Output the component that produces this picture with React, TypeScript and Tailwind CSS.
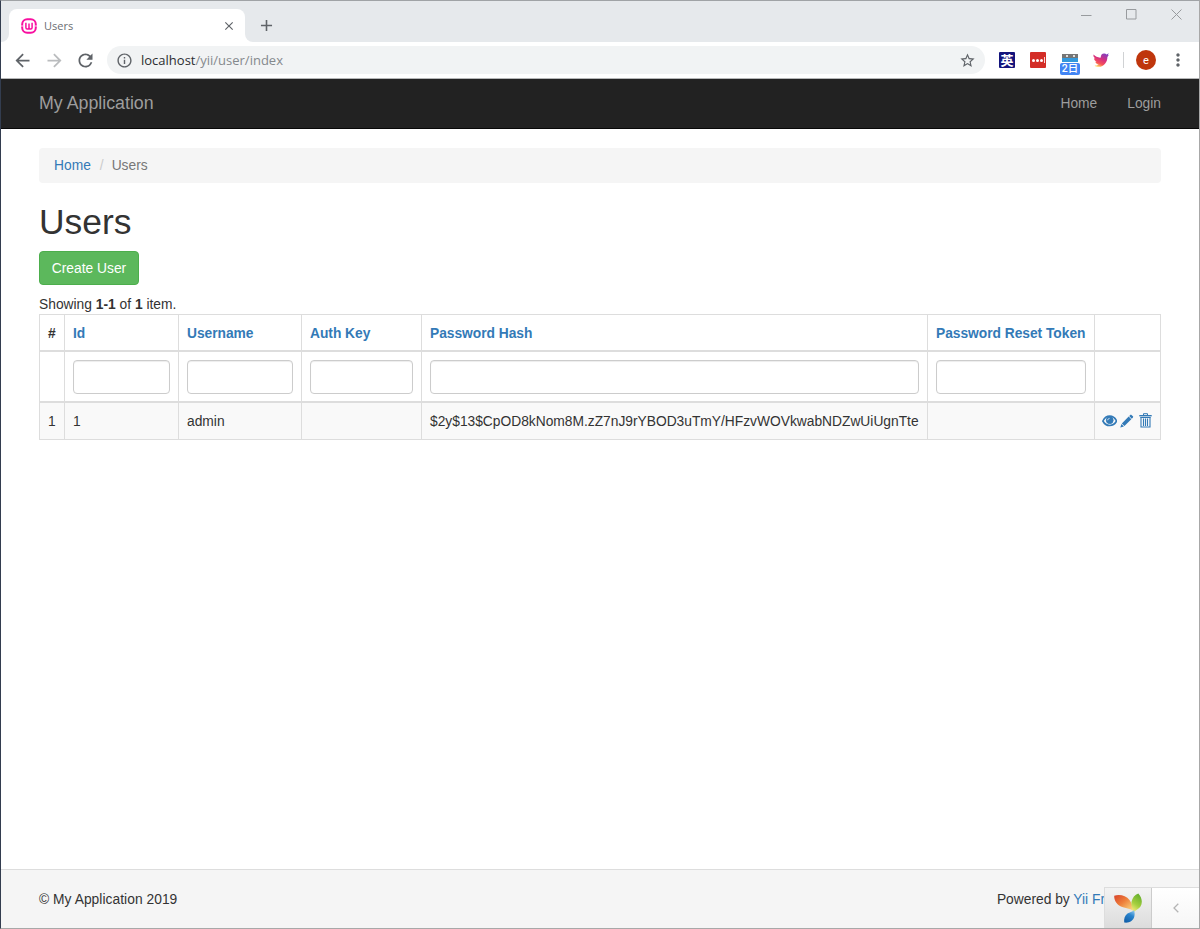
import {
  MdAdd,
  MdArrowBack,
  MdArrowForward,
  MdClose,
  MdInfoOutline,
  MdMoreVert,
  MdRefresh,
  MdStarBorder,
} from "react-icons/md";

interface Column {
  key: string;
  label: string;
  filter: boolean;
  sortable: boolean;
  width: string;
}

interface User {
  id: string;
  username: string;
  authKey: string;
  passwordHash: string;
  passwordResetToken: string;
}

const columns: Column[] = [
  { key: "serial", label: "#", filter: false, sortable: false, width: "w-[25px]" },
  { key: "id", label: "Id", filter: true, sortable: true, width: "w-[114px]" },
  { key: "username", label: "Username", filter: true, sortable: true, width: "w-[123px]" },
  { key: "authKey", label: "Auth Key", filter: true, sortable: true, width: "w-[120px]" },
  { key: "passwordHash", label: "Password Hash", filter: true, sortable: true, width: "w-[506px]" },
  { key: "passwordResetToken", label: "Password Reset Token", filter: true, sortable: true, width: "w-[167px]" },
  { key: "actions", label: "", filter: false, sortable: false, width: "w-[67px]" },
];

const users: User[] = [
  {
    id: "1",
    username: "admin",
    authKey: "",
    passwordHash: "$2y$13$CpOD8kNom8M.zZ7nJ9rYBOD3uTmY/HFzvWOVkwabNDZwUiUgnTte",
    passwordResetToken: "",
  },
];

function WampLogo() {
  return (
    <svg width="16" height="16" viewBox="0 0 16 16" fill="none" stroke="#f80fa0">
      <rect x="1.2" y="1.2" width="13.6" height="13.6" rx="5" strokeWidth="2" />
      <path d="M4.900 4.800v4.600q0 1.500 1.300 1.500h.4q1.400 0 1.400-1.500V5.500M8 9.400q0 1.500 1.400 1.500h.4q1.300 0 1.300-1.500V4.800" strokeWidth="1.500" />
      <path d="M0 8h2.300M13.700 8H16" stroke="#fff" strokeWidth=".8" />
    </svg>
  );
}

function BirdIcon() {
  return (
    <svg width="16" height="16" viewBox="0 0 16 16">
      <defs>
        <linearGradient id="bird" x1="0.8" y1="0" x2="0.3" y2="1">
          <stop offset="0" stopColor="#7b3fc4" />
          <stop offset="0.45" stopColor="#d62f7f" />
          <stop offset="0.75" stopColor="#f5505a" />
          <stop offset="1" stopColor="#ffd35c" />
        </linearGradient>
      </defs>
      <path
        d="M.6 2.600C2.500 4.800 5 5.800 7.800 5.600 7.500 3 9.200 1.400 11.200 1.500c1 0 1.800.400 2.300 1L15.800 1.300l-1 2 1-.2-1.400 1.800c.1 5-3.600 9.800-8.400 9.900-1.800.1-3.400-.3-4.400-1 1.700 0 3-.4 4-1.200C3.800 12.300 2.700 11 2.300 9.700h1.300C2 8.900 1 7.700 1 6.200l1.300.3C.8 5.400.100 4.200.6 2.600z"
        fill="url(#bird)"
      />
    </svg>
  );
}

function YiiLogo() {
  return (
    <svg width="28" height="30" viewBox="0 0 28 30">
      <defs>
        <linearGradient id="yii-orange" x1="0" y1="0" x2="1" y2="1">
          <stop offset="0" stopColor="#d8432b" />
          <stop offset="0.45" stopColor="#ee7f3a" />
          <stop offset="1" stopColor="#fbe58a" />
        </linearGradient>
        <linearGradient id="yii-green" x1="0.7" y1="0" x2="0.3" y2="1">
          <stop offset="0" stopColor="#62ad2b" />
          <stop offset="0.6" stopColor="#a5cf3f" />
          <stop offset="1" stopColor="#f3ea7a" />
        </linearGradient>
        <linearGradient id="yii-blue" x1="0.8" y1="0" x2="0.3" y2="1">
          <stop offset="0" stopColor="#8cc6ec" />
          <stop offset="0.4" stopColor="#2a84cd" />
          <stop offset="1" stopColor="#1260aa" />
        </linearGradient>
      </defs>
      <path d="M.2 2.800C5.500.900 12 2.600 15.500 7c2.300 3 3.500 7 4 11.200-3.200-2.700-6.500-2.600-10.500-3.900C3.200 12.300 0 8.300.2 2.800z" fill="url(#yii-orange)" />
      <path d="M24.300.4c3.800 4 4.500 9.300 2.200 13.200-1.500 2.500-4.300 3.300-6.500 5.400-1.800-3.200-3.200-6.700-2.400-10.500C18.400 4.700 20.700 1.600 24.300.4z" fill="url(#yii-green)" />
      <path d="M20.100 17c1.300 4.500.4 8.600-2.700 11-2 1.500-4.800 1.900-7.200 1.500-.4-3.700.6-7 3.300-9 2.100-1.500 4.800-1.300 6.600-3.500z" fill="url(#yii-blue)" />
    </svg>
  );
}

function EyeIcon() {
  return (
    <svg width="16" height="12" viewBox="0 0 16 12" fill="none" stroke="currentColor">
      <path d="M.9 6C2.400 3 5 1 8 1s5.600 2 7.100 5c-1.500 2.900-4.100 4.700-7.100 4.700S2.400 8.900.9 6z" strokeWidth="1.700" />
      <circle cx="8" cy="5.200" r="3.500" fill="currentColor" />
      <path d="M5.900 5.200c.1-1.100.8-1.800 1.900-1.900" stroke="#f9f9f9" strokeWidth=".9" />
    </svg>
  );
}

function PencilIcon() {
  return (
    <svg width="14" height="14" viewBox="0 0 14 14" fill="currentColor">
      <path d="M10.700.700q.6-.6 1.200 0l1.500 1.500q.5.600 0 1.200l-1.200 1.200-2.700-2.700zM9 2.400l2.700 2.700-7.100 7.100-2.700-2.700zM1.500 10l2.600 2.600L.300 13.700z" />
    </svg>
  );
}

function TrashIcon() {
  return (
    <svg width="13" height="15" viewBox="0 0 13 15" fill="none" stroke="currentColor">
      <path d="M4.500 2V.700h4V2" />
      <path d="M.3 2.700h12.400" strokeWidth="1.400" />
      <path d="M1.300 4.500h10.400" />
      <path d="M2 4.500v9.500h9V4.500M4.500 5.500V13M6.500 5.500V13M8.500 5.500V13" strokeWidth="1.100" />
    </svg>
  );
}

function TabStrip() {
  return (
    <div className="flex h-[41px] items-start bg-[#e6e9ec]">
      <div className="flex h-full flex-1 items-end">
        <div className="h-2 w-2 bg-white">
          <div className="h-2 w-2 rounded-br-lg bg-[#e6e9ec]" />
        </div>
        <div className="flex h-[33px] w-[236px] items-center rounded-t-lg bg-white pr-[9px] pl-3">
          <WampLogo />
          <span className="ml-[7px] flex-1 pt-px font-['Open_Sans',sans-serif] text-[11px] text-[#6b6e72]">Users</span>
          <MdClose className="size-[14px] text-[#5f6368]" />
        </div>
        <div className="h-2 w-2 bg-white">
          <div className="h-2 w-2 rounded-bl-lg bg-[#e6e9ec]" />
        </div>
        <MdAdd className="mb-[7px] ml-[4px] size-[19px] text-[#5f6368]" />
      </div>
      <div className="flex gap-[34px] pt-[8px] pr-[17px] text-[#989b9e]">
        <svg width="11" height="11" viewBox="0 0 11 11" stroke="currentColor"><path d="M0 6.500h10.500" /></svg>
        <svg width="11" height="11" viewBox="0 0 11 11" fill="none" stroke="currentColor"><path d="M.500.500h9.500v9.500H.500z" /></svg>
        <svg width="11" height="11" viewBox="0 0 11 11" stroke="currentColor"><path d="M.500.500l10 10M10.500.500l-10 10" /></svg>
      </div>
    </div>
  );
}

function Toolbar() {
  return (
    <div className="flex h-[37px] items-center border-b border-[#b5b6b7] bg-white pl-[11px] text-[#5f6368]">
      <MdArrowBack className="size-[21px]" />
      <MdArrowForward className="ml-[11px] size-[21px] text-[#babcbe]" />
      <MdRefresh className="ml-[10px] size-[21px]" />
      <div className="ml-[11px] flex h-7 w-[878px] items-center rounded-full bg-[#f1f3f4] pr-[9px] pl-[9px]">
        <MdInfoOutline className="size-[17px]" />
        <div className="ml-2 flex-1 font-['Open_Sans',sans-serif] text-[13px] text-[#85898d]">
          <span className="text-[#2c2e31]">localhost</span>/yii/user/index
        </div>
        <MdStarBorder className="size-[17px]" />
      </div>
      <div className="ml-[14px] flex size-4 items-center justify-center rounded-[1px] bg-[#14147c] pb-[2px] font-['Noto_Sans_CJK_JP',sans-serif] text-[13px] leading-none font-bold text-white">
        英
      </div>
      <div className="ml-[15px] flex size-4 items-center justify-center gap-[1px] rounded-[1px] bg-[#d32d27]">
        <i className="size-[3px] rounded-full bg-white" />
        <i className="size-[3px] rounded-full bg-white" />
        <i className="size-[3px] rounded-full bg-white" />
        <i className="h-[6px] w-px bg-white/80" />
      </div>
      <div className="mb-[3px] ml-[14px] flex w-5 flex-col items-center self-end">
        <div className="flex h-[4px] w-4 items-center justify-center gap-[5px] bg-[#757575]">
          <i className="size-[2px] rounded-full bg-white" />
          <i className="size-[2px] rounded-full bg-white" />
        </div>
        <div className="h-[4px] w-4 bg-[#3498db]" />
        <div className="mt-px flex h-3 w-5 items-center justify-center rounded-[2px] bg-[#4285f4] font-['Roboto','Noto_Sans_CJK_JP',sans-serif] text-[10.5px] leading-none font-medium text-white">
          2日
        </div>
      </div>
      <div className="ml-[13px]">
        <BirdIcon />
      </div>
      <div className="ml-[14px] h-4 w-px bg-[#d0d2d4]" />
      <div className="ml-3 flex size-5 items-center justify-center rounded-full bg-[#bf360c] font-['Roboto',sans-serif] text-[11px] leading-none text-white">
        e
      </div>
      <MdMoreVert className="ml-3 size-5" />
    </div>
  );
}

function UserGrid() {
  return (
    <table className="w-[1122px] table-fixed border-separate border-spacing-0">
      <thead>
        <tr className="h-[38px]">
          {columns.map((col) => (
            <th
              key={col.key}
              className={`${col.width} border-t border-b-2 border-l border-[#ddd] px-2 pt-[3px] text-left font-bold tracking-[-0.03px] whitespace-nowrap last:border-r ${col.sortable ? "text-[#337ab7]" : ""}`}
            >
              {col.label}
            </th>
          ))}
        </tr>
        <tr className="h-[51px]">
          {columns.map((col) => (
            <td key={col.key} className="border-b-2 border-l border-[#ddd] px-2 pt-2 pb-[7px] last:border-r">
              {col.filter && (
                <input className="block h-[34px] w-full rounded border border-[#ccc] bg-white shadow-[inset_0_1px_1px_rgba(0,0,0,0.075)]" />
              )}
            </td>
          ))}
        </tr>
      </thead>
      <tbody>
        {users.map((user, i) => (
          <tr
            key={user.id}
            className="h-[37px] bg-[#f9f9f9] [&>td]:border-b [&>td]:border-l [&>td]:border-[#ddd] [&>td]:px-2 [&>td]:pt-[2px] [&>td]:whitespace-nowrap"
          >
            <td>{i + 1}</td>
            <td>{user.id}</td>
            <td>{user.username}</td>
            <td>{user.authKey}</td>
            <td className="tracking-[-0.01px]">{user.passwordHash}</td>
            <td>{user.passwordResetToken}</td>
            <td className="border-r">
              <div className="-mt-[3px] -ml-px flex items-center gap-[3px] text-[#337ab7]">
                <EyeIcon />
                <PencilIcon />
                <span className="ml-[2px]">
                  <TrashIcon />
                </span>
              </div>
            </td>
          </tr>
        ))}
      </tbody>
    </table>
  );
}

export default function App() {
  return (
    <div className="relative flex h-[929px] w-[1200px] flex-col overflow-hidden border border-t-[#a0a3a6] border-r-[#a8a8a8] border-b-[#a8a8a8] border-l-[#333d4f] bg-white font-['Liberation_Sans',Arial,sans-serif] text-[13.8px] leading-5 text-[#333]">
      <TabStrip />
      <Toolbar />
      <nav className="flex h-[50px] items-center border-b border-[#080808] bg-[#222] px-[38px] text-[#9d9d9d]">
        <span className="flex-1 pb-px text-[17.8px]">My Application</span>
        <span>Home</span>
        <span className="ml-[30px]">Login</span>
      </nav>
      <main className="flex-1 px-[38px] pt-[19px]">
        <div className="flex h-[35px] items-center rounded bg-[#f5f5f5] px-[15px]">
          <span className="text-[#337ab7]">Home</span>
          <span className="pr-[8px] pl-[9px] text-[#ccc]">/</span>
          <span className="text-[#777]">Users</span>
        </div>
        <h1 className="mt-[20px] text-[35.4px] leading-[39px]">Users</h1>
        <button className="mt-[9px] block h-[34px] w-[100px] rounded border border-[#4cae4c] bg-[#5cb85c] pt-px text-white">
          Create User
        </button>
        <div className="mt-[9px] h-5 pt-px">
          Showing <b>1-1</b> of <b>1</b> item.
        </div>
        <UserGrid />
      </main>
      <footer className="flex h-[59px] items-center justify-between border-t border-[#ddd] bg-[#f5f5f5] px-[38px] pt-[2px]">
        <span className="tracking-[0.04px]">© My Application 2019</span>
        <span>
          Powered by <span className="text-[#337ab7]">Yii Framework</span>
        </span>
      </footer>
      {/* collapsed debug toolbar, sits on top of the footer */}
      <div className="absolute right-0 bottom-0 flex h-[41px] w-[95px] border-t border-l border-[#ddd]">
        <div className="flex w-[47px] items-center justify-center border-r border-[#ccc] bg-linear-to-b from-[#f3f3f3] to-[#dcdcdc]">
          <YiiLogo />
        </div>
        <div className="flex flex-1 items-center justify-center bg-linear-to-b from-white to-[#f6f6f6]">
          <svg width="6" height="10" viewBox="0 0 6 10" fill="none" stroke="#b5b5b5" strokeWidth="1.3"><path d="M5.300.7L1 5l4.300 4.300" /></svg>
        </div>
      </div>
    </div>
  );
}
